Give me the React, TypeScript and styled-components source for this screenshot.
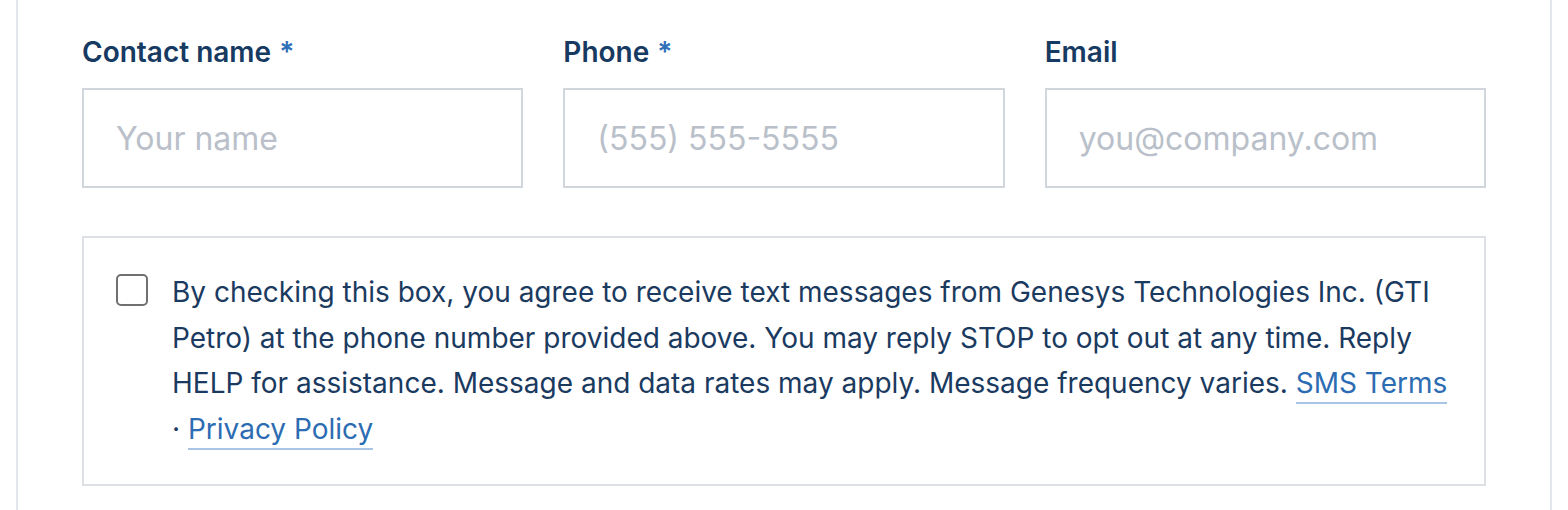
import styled, { createGlobalStyle } from "styled-components";

const GlobalStyle = createGlobalStyle`
  html, body {
    margin: 0;
    padding: 0;
    background: #ffffff;
  }
  body {
    font-family: Inter, "Noto Sans", sans-serif;
    -webkit-font-smoothing: antialiased;
  }
  * {
    box-sizing: border-box;
  }
`;

const fields = [
  { label: "Contact name", required: true, placeholder: "Your name", type: "text" },
  { label: "Phone", required: true, placeholder: "(555) 555-5555", type: "tel" },
  { label: "Email", required: false, placeholder: "you@company.com", type: "email" },
];

const App: React.FC = () => {
  return (
    <>
      <GlobalStyle />
      <Page>
        <Card>
          <FieldRow>
            {fields.map((f) => (
              <Field key={f.label}>
                <Label>
                  {f.label}
                  {f.required && <Required>*</Required>}
                </Label>
                <Input type={f.type} placeholder={f.placeholder} />
              </Field>
            ))}
          </FieldRow>

          <ConsentBox>
            <Checkbox type="checkbox" />
            <ConsentText>
              By checking this box, you agree to receive text messages from Genesys
              Technologies Inc. (GTI Petro) at the phone number provided above. You may
              reply STOP to opt out at any time. Reply HELP for assistance. Message and
              data rates may apply. Message frequency varies.{" "}
              <TextLink href="#">SMS Terms</TextLink> · <TextLink href="#">Privacy Policy</TextLink>
            </ConsentText>
          </ConsentBox>
        </Card>
      </Page>
    </>
  );
};

const Page = styled.div`
  padding: 0 16px;
  height: 510px;
  overflow: hidden;
`;

const Card = styled.div`
  border-left: 2px solid #e2e5ea;
  border-right: 2px solid #e2e5ea;
  padding: 35px 64px 80px;
  min-height: 600px;
`;

const FieldRow = styled.div`
  display: grid;
  grid-template-columns: repeat(3, 1fr);
  gap: 40px;
`;

const Field = styled.div`
  display: flex;
  flex-direction: column;
`;

const Label = styled.label`
  font-size: 28px;
  line-height: 34px;
  font-weight: 600;
  color: #163a62;
  margin-bottom: 19px;
`;

const Required = styled.span`
  color: #2f6fb7;
  margin-left: 8px;
`;

const Input = styled.input`
  height: 100px;
  width: 100%;
  border: 2px solid #d1d6dc;
  border-radius: 0;
  padding: 0 32px;
  font-family: Inter, "Noto Sans", sans-serif;
  font-size: 32px;
  color: #163a62;
  background: #fff;
  outline: none;

  &::placeholder {
    color: #b9c0c9;
  }
`;

const ConsentBox = styled.div`
  margin-top: 48px;
  border: 2px solid #dde1e6;
  padding: 32px;
  display: flex;
  align-items: flex-start;
  gap: 24px;
`;

const Checkbox = styled.input`
  appearance: none;
  flex: none;
  width: 32px;
  height: 32px;
  margin: 4px 0 0;
  border: 2px solid #707070;
  border-radius: 5px;
  background: #fff;
`;

const ConsentText = styled.p`
  margin: 0;
  font-size: 28px;
  line-height: 45.5px;
  color: #1b3a5f;
`;

const TextLink = styled.a`
  color: #2c6cb2;
  text-decoration: none;
  border-bottom: 2px solid #a9c4e4;
  padding-bottom: 2px;
`;

export default App;
